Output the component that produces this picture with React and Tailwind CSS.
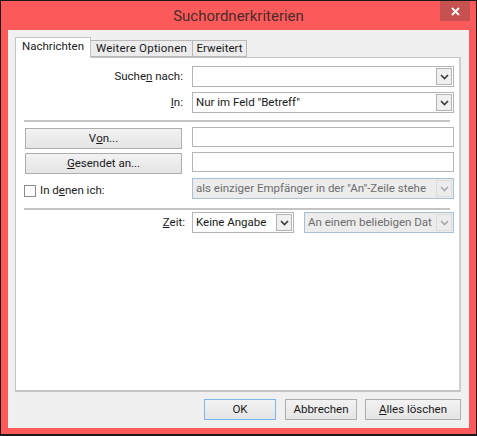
const font = { fontFamily: 'Roboto, sans-serif' };

function Chevron({ disabled }) {
  return (
    <svg width="9" height="6" viewBox="0 0 9 6" fill="none">
      <path d="M1 1 L4.5 4.5 L8 1" stroke={disabled ? "#a8a8b0" : "#3a3a3a"} strokeWidth="1.6" />
    </svg>
  );
}

function Select({ value, className = "", disabled }) {
  return (
    <div className={`flex h-[21px] items-center justify-between border pl-[3px] pr-px ${disabled ? "border-[#a9bfd6] bg-[#ececec] text-[#6d6d6d]" : "border-[#b4b4b4] bg-white text-[#1a1a1a]"} ${className}`}>
      <span className="whitespace-nowrap">{value}</span>
      <span className={`flex h-[17px] w-[16px] shrink-0 items-center justify-center border ${disabled ? "border-[#dcdcdc] bg-[#ececec]" : "border-[#b4b4b4] bg-[#efefef]"}`}>
        <Chevron disabled={disabled} />
      </span>
    </div>
  );
}

function Input({ className = "" }) {
  return <div className={`h-[20px] border border-[#b4b4b4] bg-white ${className}`} />;
}

function Btn({ children, className = "" }) {
  return (
    <button className={`flex h-[21px] items-center justify-center border bg-gradient-to-b from-[#f2f2f2] to-[#e5e5e5] text-[11.5px] text-[#1a1a1a] ${className}`}>
      {children}
    </button>
  );
}

function Sep() {
  return <div className="ml-[8px] mr-[9px] h-[2px] bg-[#c4c4c4]" />;
}

export default function App() {
  return (
    <div style={font} className="relative flex h-[436px] w-[477px] flex-col border border-b-2 border-[#1a1a1a] bg-[#fc5a5a] text-[#1a1a1a]">
      <div className="flex h-[29px] shrink-0 items-center justify-center pt-px text-[15px] text-[#4a2a2a]">Suchordnerkriterien</div>
      <button className="absolute right-[6px] top-0 flex h-[20px] w-[30px] items-center justify-center bg-[#c75050]">
        <svg width="9" height="9" viewBox="0 0 9 9" fill="none">
          <path d="M1 1 L8 8 M8 1 L1 8" stroke="#fff" strokeWidth="1.8" />
        </svg>
      </button>
      <div className="mb-[6px] ml-[7px] mr-[7px] flex flex-1 flex-col bg-[#f0f0f0] pl-[7px] pr-[8px] pt-[7px]">
        <div className="flex h-[20px] shrink-0 items-end text-[11.5px]">
          <div className="z-10 mb-[-1px] flex h-[21px] w-[76px] items-center justify-center border border-b-0 border-[#c4c4c4] bg-white pb-[2px]">Nachrichten</div>
          <div className="flex h-[17px] w-[102px] items-center justify-center border border-l-0 border-[#b8b8b8] bg-[#ececec] tracking-[0.2px]">Weitere Optionen</div>
          <div className="flex h-[17px] w-[54px] items-center justify-center border border-l-0 border-[#b8b8b8] bg-[#ececec]">Erweitert</div>
        </div>
        <div className="flex h-[335px] shrink-0 flex-col border-2 border-l border-t border-[#c4c4c4] border-r-[#cfcfcf] bg-white text-[11.5px]">
          <div className="mt-[8px] flex items-center">
            <span className="w-[167px] text-right">Suche<u>n</u> nach:</span>
            <Select value="" className="ml-[9px] w-[262px]" />
          </div>
          <div className="mt-[5px] flex items-center">
            <span className="w-[167px] text-right"><u>I</u>n:</span>
            <Select value={'Nur im Feld "Betreff"'} className="ml-[9px] w-[262px]" />
          </div>
          <div className="mt-[7px]"><Sep /></div>
          <div className="mt-[5px] flex items-start">
            <Btn className="ml-[9px] mt-px w-[157px] border-[#adadad]">V<u>o</u>n...</Btn>
            <Input className="ml-[10px] w-[262px]" />
          </div>
          <div className="mt-[3px] flex items-start">
            <Btn className="ml-[9px] mt-px w-[157px] border-[#adadad]">
              <span><u>G</u>esendet an...</span>
            </Btn>
            <Input className="ml-[10px] w-[262px]" />
          </div>
          <div className="mt-[4px] flex items-center">
            <div className="flex w-[167px] items-center pl-[8px] pt-[4px]">
              <span className="h-[12px] w-[12px] border border-[#8a8a8a] bg-white" />
              <span className="ml-[4px]">In d<u>e</u>nen ich:</span>
            </div>
            <Select disabled value={'als einziger Empfänger in der "An"-Zeile stehe'} className="ml-[9px] w-[262px]" />
          </div>
          <div className="mt-[9px]"><Sep /></div>
          <div className="mt-[2px] flex items-center">
            <span className="w-[169px] text-right"><u>Z</u>eit:</span>
            <Select value="Keine Angabe" className="ml-[7px] w-[102px]" />
            <Select disabled value="An einem beliebigen Dat" className="ml-[10px] w-[150px]" />
          </div>
        </div>
        <div className="mt-[7px] flex justify-end">
          <Btn className="w-[72px] border-[#7eb4ea]">OK</Btn>
          <Btn className="ml-[9px] w-[72px] border-[#adadad]">Abbrechen</Btn>
          <Btn className="ml-[8px] w-[96px] border-[#adadad]"><span><u>A</u>lles löschen</span></Btn>
        </div>
      </div>
    </div>
  );
}
